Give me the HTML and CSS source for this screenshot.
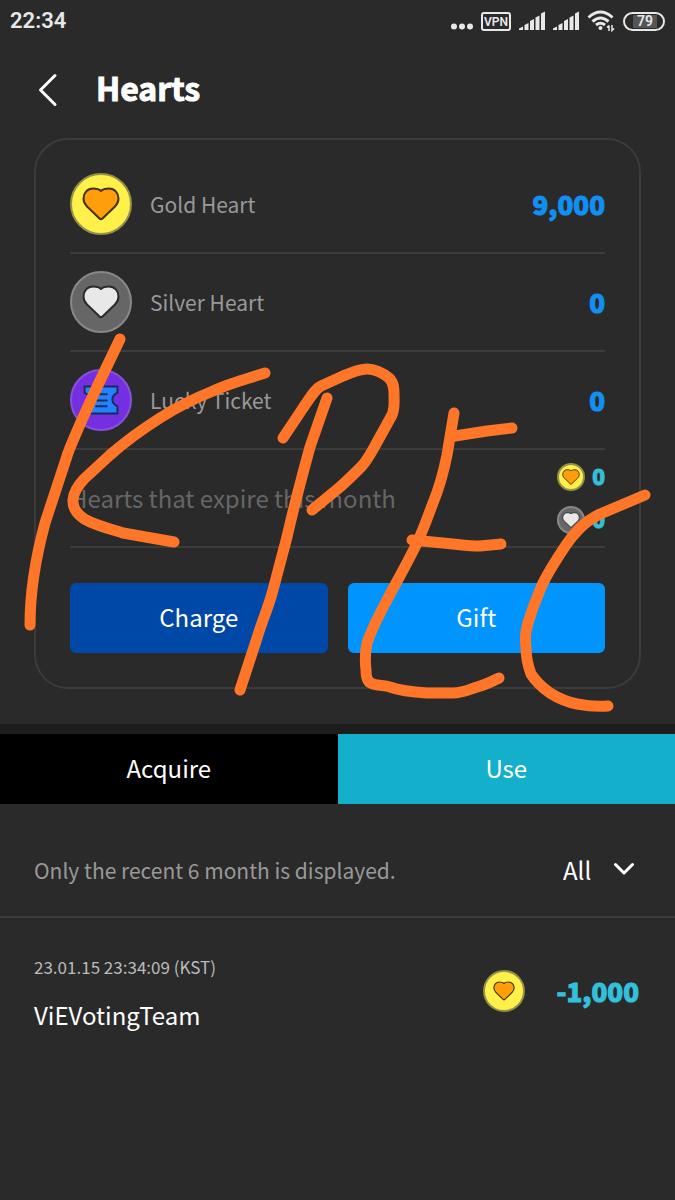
FILE: index.html
```
<!DOCTYPE html>
<html lang="en">
<head>
    <meta charset="UTF-8">
    <meta name="viewport" content="width=device-width, initial-scale=1">
    <title>Hearts</title>
    <link rel="stylesheet" href="styles.css">
</head>
<body>
<svg class="sprite" aria-hidden="true">
    <symbol id="heart" viewBox="0 0 38 34">
        <path d="M19 4C21 2 24 1.5 27 1.5C32.5 1.5 36.5 6 36.5 11.5C36.5 15 35 17.5 33 19.5L20.5 31.5Q19 33 17.5 31.5L5 19.5C3 17.5 1.5 15 1.5 11.5C1.5 6 5.5 1.5 11 1.5C14 1.5 17 2 19 4Z" stroke-linejoin="round"/>
    </symbol>
    <symbol id="signal" viewBox="0 0 26 20">
        <path d="M0 19V17.5L4 15.500V19ZM5.500 19V14L9.500 12V19ZM11 19V10L15 8V19ZM16.500 19V6.500L20.500 4.500V19ZM22 19V2.500L26 .5V19Z" fill="#e8e8e8"/>
    </symbol>
</svg>

<div class="status-bar">
    <span class="time">22:34</span>
    <div class="status-icons">
        <svg width="22" height="20" viewBox="0 0 22 20" fill="#e8e8e8">
            <circle cx="3" cy="15.500" r="3"/><circle cx="11" cy="15.500" r="3"/><circle cx="19" cy="15.500" r="3"/>
        </svg>
        <span class="vpn">VPN</span>
        <svg width="26" height="20"><use href="#signal"/></svg>
        <svg width="26" height="20"><use href="#signal"/></svg>
        <svg width="28" height="22" viewBox="0 0 28 22" fill="none" stroke="#e8e8e8" stroke-width="3">
            <path d="M1.500 7.500Q13.500 -3.500 25.500 7.500M5.500 11.500Q13.500 4.500 21.500 11.500M9 15Q13.500 11.500 18 15"/>
            <circle cx="13.500" cy="18" r="2" fill="#e8e8e8" stroke="none"/>
            <path d="M22 15.500V21M20 17.500L22 15.500M25 15V20.500L27 18.500" stroke-width="1.500"/>
        </svg>
        <span class="battery"><span class="battery-level">79</span></span>
    </div>
</div>

<header class="header">
    <button class="back" aria-label="Back">
        <svg width="20" height="34" viewBox="0 0 20 34" fill="none" stroke="#fff" stroke-width="3" stroke-linecap="round" stroke-linejoin="round">
            <path d="M17 2.500L2.500 17L17 31.500"/>
        </svg>
    </button>
    <h1>Hearts</h1>
</header>

<main>
    <section class="wallet">
        <div class="card">
            <div class="row">
                <span class="coin gold"><svg><use href="#heart"/></svg></span>
                <span class="name">Gold Heart</span>
                <span class="amount">9,000</span>
            </div>
            <div class="row">
                <span class="coin silver"><svg><use href="#heart"/></svg></span>
                <span class="name">Silver Heart</span>
                <span class="amount">0</span>
            </div>
            <div class="row">
                <span class="coin ticket">
                    <svg viewBox="0 0 36 31" stroke="#172d58" stroke-width="2">
                        <path d="M1 1.500H35V8C28 11 28 19 35 22V29.500H1V22C8 19 8 11 1 8Z" fill="#2582ff"/>
                        <path d="M13 9.500H24M13 16H24M13 22H24" stroke-linecap="round"/>
                    </svg>
                </span>
                <span class="name">Lucky Ticket</span>
                <span class="amount">0</span>
            </div>
            <div class="row">
                <span class="expire-text">Hearts that expire this month</span>
                <div class="expire-list">
                    <div class="expire">
                        <span class="coin small gold"><svg><use href="#heart"/></svg></span>
                        <span>0</span>
                    </div>
                    <div class="expire">
                        <span class="coin small silver"><svg><use href="#heart"/></svg></span>
                        <span>0</span>
                    </div>
                </div>
            </div>
            <div class="buttons">
                <button class="charge">Charge</button>
                <button class="gift">Gift</button>
            </div>
        </div>

        <!-- marker drawing over the card -->
        <svg class="drawing" viewBox="0 138 675 586" aria-hidden="true">
            <path d="M120 339L97 387C85 413 76 432 68 453L45 523C35 560 30 590 30 625"/>
            <path d="M265 373C247 379 230 383 213 391C193 399 177 407 160 418C141 430 126 441 110 455L84 479C71 493 68 507 83 518C91 524 107 528 123 533L174 542"/>
            <path d="M327 398L310 447C301 480 294 506 287 537L273 590C269 606 262 621 257 638L240 690"/>
            <path d="M283 438L303 408C310 398 315 389 321 386L343 376C350 373 359 369 367 369C374 369 383 373 389 378C394 383 394 389 394 394C394 401 395 408 392 415L376 444C371 453 367 461 361 467C355 473 348 480 340 487L312 510"/>
            <path d="M454 413L447 455C443 475 440 486 433 503C428 516 424 528 417 543C408 562 398 579 387 600C378 617 372 628 367 643C365 652 365 661 366 670C366 677 368 683 373 684C379 686 385 685 390 687C401 691 411 692 427 693H453C462 693 468 690 477 687C485 685 491 682 499 678"/>
            <path d="M455 436L487 431L512 428"/>
            <path d="M412 540L453 544C463 545 471 546 480 546L501 544"/>
            <path d="M645 495L600 514C592 518 586 522 580 528C575 533 570 539 566 545C558 557 550 569 543 583C537 597 531 611 527 627C525 634 525 640 526 647C526 657 528 666 531 674C536 682 543 688 550 693C558 698 567 702 577 704C587 706 597 707 608 706"/>
        </svg>
    </section>

    <nav class="tabs">
        <button class="acquire">Acquire</button>
        <button class="use">Use</button>
    </nav>

    <div class="filter">
        <p>Only the recent 6 month is displayed.</p>
        <div class="select">
            <select aria-label="Filter">
                <option>All</option>
                <option>Gold Heart</option>
                <option>Silver Heart</option>
            </select>
            <svg width="22" height="14" viewBox="0 0 22 14" fill="none" stroke="#fff" stroke-width="3" stroke-linecap="round" stroke-linejoin="round">
                <path d="M2.500 2.500L11 11L19.500 2.500"/>
            </svg>
        </div>
    </div>

    <div class="history">
        <div class="info">
            <span class="date">23.01.15 23:34:09 (KST)</span>
            <span class="team">ViEVotingTeam</span>
        </div>
        <span class="coin medium gold"><svg><use href="#heart"/></svg></span>
        <span class="amount used">-1,000</span>
    </div>
</main>
</body>
</html>
```
FILE: styles.css
```
* {
    box-sizing: border-box;
}
body {
    margin: 0;
    background-color: #2a2a2a;
    color: #fff;
    font-family: "Noto Sans CJK KR", "Noto Sans", sans-serif;
    font-size: 21px;
    line-height: 32px;
}
button, select {
    border: none;
    padding: 0;
    color: #fff;
    font-family: inherit;
    font-size: 24px;
    line-height: 32px;
    cursor: pointer;
}
svg {
    display: block;
}
.sprite {
    position: absolute;
    width: 0;
    height: 0;
}

/* status bar */
.status-bar {
    display: flex;
    justify-content: space-between;
    align-items: center;
    height: 42px;
    padding: 0 10px;
    color: #e8e8e8;
    font-family: Roboto, sans-serif;
    font-size: 22px;
    font-weight: 600;
}
.status-icons {
    display: flex;
    align-items: center;
    gap: 8px;
}
.vpn {
    width: 30px;
    height: 19px;
    border: 2px solid #e8e8e8;
    border-radius: 3px;
    font-size: 12px;
    line-height: 16px;
    text-align: center;
}
.battery {
    width: 42px;
    height: 19px;
    padding: 1px 6px 1px 8px;
    border: 2px solid #e8e8e8;
    border-radius: 10px;
    font-size: 14px;
    line-height: 13px;
    text-align: center;
}
.battery-level {
    display: block;
    background-color: #555;
}

/* title */
.header {
    display: flex;
    align-items: center;
    gap: 38px;
    height: 96px;
    padding: 0 38px;
}
.back {
    background: none;
}
h1 {
    margin: 0;
    padding-bottom: 7px;
    font-size: 32px;
    font-weight: 700;
    -webkit-text-stroke: 1px #fff;
}

/* card */
.wallet {
    position: relative;
    padding: 0 34px 35px;
    border-bottom: 10px solid #1d1d1d;
}
.card {
    padding: 16px 34px 34px;
    border: 2px solid #3c3c3c;
    border-radius: 34px;
}
.row {
    display: flex;
    align-items: center;
    gap: 18px;
    height: 98px;
    border-bottom: 2px solid #3c3c3c;
}
.name {
    flex: 1;
    color: #999;
}
.amount {
    color: #1290f2;
    font-size: 26px;
    font-weight: 900;
    -webkit-text-stroke: 1px currentColor;
}
.coin {
    display: flex;
    flex-shrink: 0;
    align-items: center;
    justify-content: center;
    width: 62px;
    height: 62px;
    border: 2px solid #888;
    border-radius: 50%;
}
.coin svg {
    width: 38px;
    height: 34px;
    stroke-width: 2px;
}
.gold {
    background-color: #fff04a;
    border-color: #94904a;
    fill: #ff9d0a;
    stroke: #48300a;
}
.silver {
    background-color: #666;
    fill: #e8e8e8;
    stroke: #2a2a2a;
}
.ticket {
    background-color: #7430e0;
    border-color: #8752da;
}
.ticket svg {
    width: 36px;
    height: 30px;
}
.small {
    width: 28px;
    height: 28px;
}
.small svg {
    width: 18px;
    height: 16px;
}
.medium {
    width: 42px;
    height: 42px;
}
.medium svg {
    width: 22px;
    height: 20px;
}
.expire-text {
    flex: 1;
    color: #666;
    font-size: 24px;
}
.expire-list {
    display: flex;
    flex-direction: column;
    gap: 13px;
}
.expire {
    display: flex;
    align-items: center;
    gap: 7px;
    color: #35bfd4;
    font-weight: 900;
    line-height: 28px;
    -webkit-text-stroke: 1px currentColor;
}
.expire > span:last-child {
    padding-bottom: 2px;
}
.buttons {
    display: flex;
    gap: 20px;
    margin-top: 35px;
}
.buttons button {
    flex: 1;
    height: 70px;
    padding-bottom: 3px;
    border-radius: 6px;
}
.charge {
    background-color: #0048a8;
}
.gift {
    background-color: #0094ff;
}
.drawing {
    position: absolute;
    top: 0;
    left: 0;
    width: 100%;
    fill: none;
    stroke: #ff7628;
    stroke-width: 11px;
    stroke-linecap: round;
    stroke-linejoin: round;
    pointer-events: none;
}

/* tabs */
.tabs {
    display: flex;
}
.tabs button {
    flex: 1;
    height: 70px;
    padding-bottom: 3px;
}
.acquire {
    background-color: #000;
}
.use {
    background-color: #14afca;
}

/* list */
.filter {
    display: flex;
    align-items: center;
    justify-content: space-between;
    height: 114px;
    padding: 20px 40px 0 34px;
    border-bottom: 2px solid #3c3c3c;
}
.filter p {
    margin: 0;
    color: #999;
}
.select {
    position: relative;
}
.select select {
    display: block;
    width: 72px;
    appearance: none;
    background: none;
}
.select svg {
    position: absolute;
    top: 8px;
    right: 0;
    pointer-events: none;
}
.history {
    display: flex;
    align-items: center;
    padding: 33px 36px 32px 34px;
}
.info {
    display: flex;
    flex: 1;
    flex-direction: column;
    gap: 16px;
}
.date {
    color: #bbb;
    font-size: 17px;
}
.team {
    font-size: 24px;
}
.used {
    margin-left: 32px;
    color: #32c0dc;
}
```
